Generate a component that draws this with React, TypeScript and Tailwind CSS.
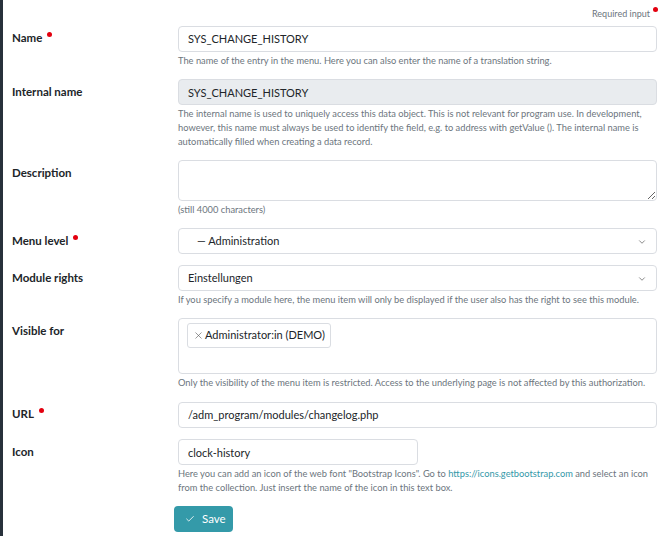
import React from 'react';
import { ChevronDown, Check, X } from 'lucide-react';

const font = { fontFamily: 'Lato, "Noto Sans", sans-serif' };

const RequiredDot = () => (
  <span className="inline-block w-[5px] h-[5px] rounded-full bg-[#e3000f] ml-[5px] -translate-y-[5px]" />
);

interface RowProps {
  label: string;
  required?: boolean;
  help?: React.ReactNode;
  children: React.ReactNode;
}

const FormRow: React.FC<RowProps> = ({ label, required, help, children }) => (
  <div className="flex mb-[11px]">
    <div className="w-[166px] shrink-0 pt-[5px] leading-[16px] text-[11.5px] font-bold text-[#212529]">
      {label}
      {required && <RequiredDot />}
    </div>
    <div className="flex-1 min-w-0">
      {children}
      {help && (
        <div className="mt-[2px] text-[9.3px] leading-[14px] text-[#6c757d]">{help}</div>
      )}
    </div>
  </div>
);

const inputBase =
  'h-[26px] px-[9px] border border-[#dadde2] rounded-[4px] text-[11px] text-[#212529] outline-none';

const Select: React.FC<{ value: string; indent?: boolean }> = ({ value, indent }) => (
  <div className="relative h-[26px] border border-[#dadde2] rounded-[4px] bg-white flex items-center px-[9px] text-[11px] text-[#212529]">
    <span className={indent ? 'pl-[9px]' : ''}>{value}</span>
    <ChevronDown className="absolute right-[9px] top-[8px] h-[10px] w-[10px] text-[#444]" strokeWidth={1.5} />
  </div>
);

export default function App() {
  return (
    <div className="min-h-[536px] bg-white border-l-[3px] border-[#28313b] pl-[9px] pr-[10px]" style={font}>
      <div className="flex justify-end pt-[8px] h-[25px] text-[9px] text-[#6c757d] leading-[12px]">
        <span>Required input</span>
        <span className="inline-block w-[5px] h-[5px] rounded-full bg-[#e3000f] ml-[3px] mt-[-1px] mr-[-1px]" />
      </div>

      <FormRow
        label="Name"
        required
        help="The name of the entry in the menu. Here you can also enter the name of a translation string."
      >
        <input className={inputBase + ' w-full bg-white'} defaultValue="SYS_CHANGE_HISTORY" />
      </FormRow>

      <FormRow
        label="Internal name"
        help="The internal name is used to uniquely access this data object. This is not relevant for program use. In development, however, this name must always be used to identify the field, e.g. to address with getValue (). The internal name is automatically filled when creating a data record."
      >
        <input className={inputBase + ' w-full bg-[#e9ecef]'} defaultValue="SYS_CHANGE_HISTORY" disabled />
      </FormRow>

      <FormRow label="Description" help="(still 4000 characters)">
        <textarea className="block w-full h-[41px] border border-[#dadde2] rounded-[4px] bg-white outline-none" />
      </FormRow>

      <FormRow label="Menu level" required>
        <Select value="— Administration" indent />
      </FormRow>

      <FormRow
        label="Module rights"
        help="If you specify a module here, the menu item will only be displayed if the user also has the right to see this module."
      >
        <Select value="Einstellungen" />
      </FormRow>

      <FormRow
        label="Visible for"
        help="Only the visibility of the menu item is restricted. Access to the underlying page is not affected by this authorization."
      >
        <div className="h-[56px] border border-[#dadde2] rounded-[4px] bg-white pt-[4px] pl-[8px]">
          <span className="inline-flex items-center h-[25px] px-[5px] border border-[#dadde2] rounded-[3px] text-[11px] text-[#212529]">
            <X className="h-[11px] w-[11px] mr-[1px] text-[#555]" strokeWidth={1.3} />
            Administrator:in (DEMO)
          </span>
        </div>
      </FormRow>

      <FormRow label="URL" required>
        <input className={inputBase + ' w-full bg-white'} defaultValue="/adm_program/modules/changelog.php" />
      </FormRow>

      <FormRow
        label="Icon"
        help={
          <>
            Here you can add an icon of the web font "Bootstrap Icons". Go to{' '}
            <span className="text-[#3398a8]">https://icons.getbootstrap.com</span> and select an icon
            from the collection. Just insert the name of the icon in this text box.
          </>
        }
      >
        <input className={inputBase + ' w-[240px] bg-white'} defaultValue="clock-history" />
      </FormRow>

      <div className="pl-[162px]">
        <button className="flex items-center h-[26px] w-[59px] rounded-[4px] bg-[#349aa9] text-white text-[11.5px] pl-[11px]">
          <Check className="h-[10px] w-[10px] mr-[7px]" strokeWidth={2} />
          Save
        </button>
      </div>
    </div>
  );
}
